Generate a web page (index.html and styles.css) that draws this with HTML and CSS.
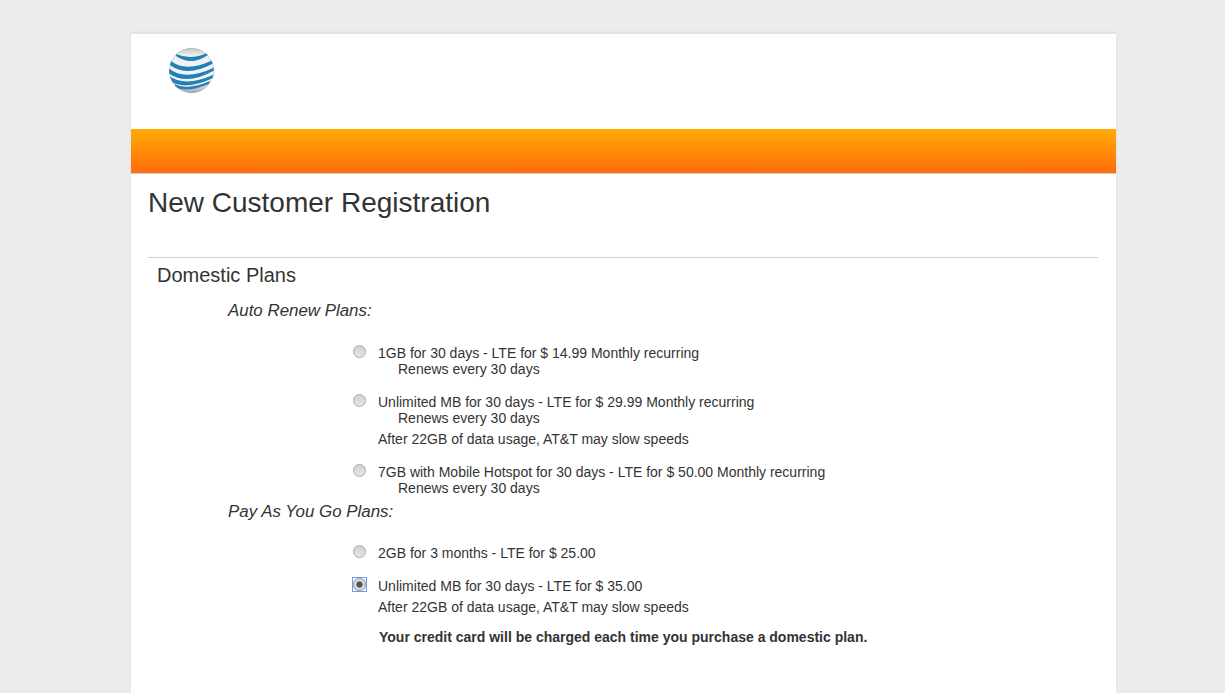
FILE: index.html
```html
<!DOCTYPE html>
<html lang="en">
<head>
<meta charset="utf-8">
<title>New Customer Registration</title>
<link rel="stylesheet" href="styles.css">
</head>
<body>
<main class="page">
  <header class="brand">
    <svg class="globe" viewBox="0 0 45 45" width="45" height="45" aria-label="AT&amp;T logo">
      <defs>
        <linearGradient id="ball" x1="0" y1="0" x2="0" y2="1">
          <stop offset="0" stop-color="#c6c8c8"/>
          <stop offset="0.18" stop-color="#f2f2f2"/>
          <stop offset="0.78" stop-color="#f4f5f5"/>
          <stop offset="1" stop-color="#a3a6a6"/>
        </linearGradient>
        <clipPath id="round"><circle cx="22.5" cy="22.5" r="22.5"/></clipPath>
      </defs>
      <circle cx="22.5" cy="22.5" r="22.5" fill="url(#ball)"/>
      <g clip-path="url(#round)" fill="#2080b8">
        <path d="M7 6Q22 12.500 38 5L39 7Q22 18.500 7 8Z"/>
        <path d="M1.500 12.500Q16 25 43 12.500L44 15.500Q18 29.750 1 17Z"/>
        <path d="M0 20.500Q16 33.500 45 19.500L45 22.500Q18 38 0 25.500Z"/>
        <path d="M0 28Q16 39.500 45 26.500L45 29.500Q18 43 0 33Z"/>
        <path d="M5 36Q18 43 41 33L40 36Q18 45 7 39.500Z"/>
      </g>
      <circle cx="22.500" cy="22.500" r="22" fill="none" stroke="#8f9aa0" stroke-opacity="0.4"/>
    </svg>
  </header>
  <div class="band"></div>
  <section class="content">
    <h1 class="title">New Customer Registration</h1>
    <hr class="rule">
    <h2 class="section-title">Domestic Plans</h2>
    <div class="group">
      <h3 class="group-title">Auto Renew Plans:</h3>
      <ul class="plans">
        <li class="plan">
          <input class="radio" type="radio" name="plan">
          <div class="plan-text">
            <div>1GB for 30 days - LTE for $ 14.99 Monthly recurring</div>
            <div class="renew">Renews every 30 days</div>
          </div>
        </li>
        <li class="plan">
          <input class="radio" type="radio" name="plan">
          <div class="plan-text">
            <div>Unlimited MB for 30 days - LTE for $ 29.99 Monthly recurring</div>
            <div class="renew">Renews every 30 days</div>
            <div class="note">After 22GB of data usage, AT&amp;T may slow speeds</div>
          </div>
        </li>
        <li class="plan">
          <input class="radio" type="radio" name="plan">
          <div class="plan-text">
            <div>7GB with Mobile Hotspot for 30 days - LTE for $ 50.00 Monthly recurring</div>
            <div class="renew">Renews every 30 days</div>
          </div>
        </li>
      </ul>
      <h3 class="group-title group-second">Pay As You Go Plans:</h3>
      <ul class="plans">
        <li class="plan">
          <input class="radio" type="radio" name="plan">
          <div class="plan-text"><div>2GB for 3 months - LTE for $ 25.00</div></div>
        </li>
        <li class="plan">
          <input class="radio focused" type="radio" name="plan" checked>
          <div class="plan-text">
            <div>Unlimited MB for 30 days - LTE for $ 35.00</div>
            <div class="note">After 22GB of data usage, AT&amp;T may slow speeds</div>
          </div>
        </li>
      </ul>
      <p class="charge">Your credit card will be charged each time you purchase a domestic plan.</p>
    </div>
  </section>
</main>
</body>
</html>
```
FILE: styles.css
```css
html, body {
  margin: 0;
  height: 693px;
  overflow: hidden;
  background: #ececec;
}
body {
  font-family: "Liberation Sans", Arial, sans-serif;
  color: #333;
  padding-top: 34px;
  box-sizing: border-box;
}
.page {
  width: 985px;
  height: 659px;
  margin-left: 131px;
  background: #fff;
  box-shadow: 0 -2px 3px rgba(0, 0, 0, 0.06);
}
.brand {
  height: 95px;
  padding: 14px 0 0 38px;
  box-sizing: border-box;
}
.globe { display: block; }
.band {
  height: 44px;
  background: linear-gradient(#ffaa05, #ff6d0a);
  border-bottom: 1px solid #c9ccd0;
}
.content { padding: 0 18px 0 17px; }
.title {
  margin: 12px 0 0;
  font-size: 28px;
  line-height: 34px;
  font-weight: 400;
}
.rule {
  margin: 37px 0 0;
  border: 0;
  border-top: 1px solid #d0d0d0;
}
.section-title {
  margin: 6px 0 0 9px;
  font-size: 20px;
  line-height: 22px;
  font-weight: 400;
}
.group { padding-left: 80px; }
.group-title {
  margin: 15px 0 0;
  font-size: 16.9px;
  line-height: 20px;
  font-style: italic;
  font-weight: 400;
}
.group-second { margin-top: 6px; }
.plans {
  list-style: none;
  margin: 24px 0 0 125px;
  padding: 0;
  display: flex;
  flex-direction: column;
  gap: 17px;
}
.group-second + .plans { margin-top: 23px; }
.plan {
  display: flex;
  align-items: flex-start;
  font-size: 14px;
  line-height: 16px;
}
.radio {
  appearance: none;
  box-sizing: border-box;
  flex: none;
  width: 13px;
  height: 13px;
  margin: 0 12px 0 0;
  border-radius: 50%;
  border: 1px solid #a8a8a8;
  background: linear-gradient(#d2d2d2, #e6e6e6);
}
.radio.focused {
  border: 0;
  border-radius: 0;
  background: radial-gradient(circle, #555 0 2.8px, #d6d6d6 3.4px 5.5px, #a8a8a8 6px 6.5px, #fff 7px);
  outline: 1.5px solid #6aa0ef;
}
.renew { padding-left: 20px; }
.note { margin-top: 5px; }
.charge {
  margin: 14px 0 0 151px;
  font-size: 14px;
  line-height: 16px;
  font-weight: 700;
}
```
